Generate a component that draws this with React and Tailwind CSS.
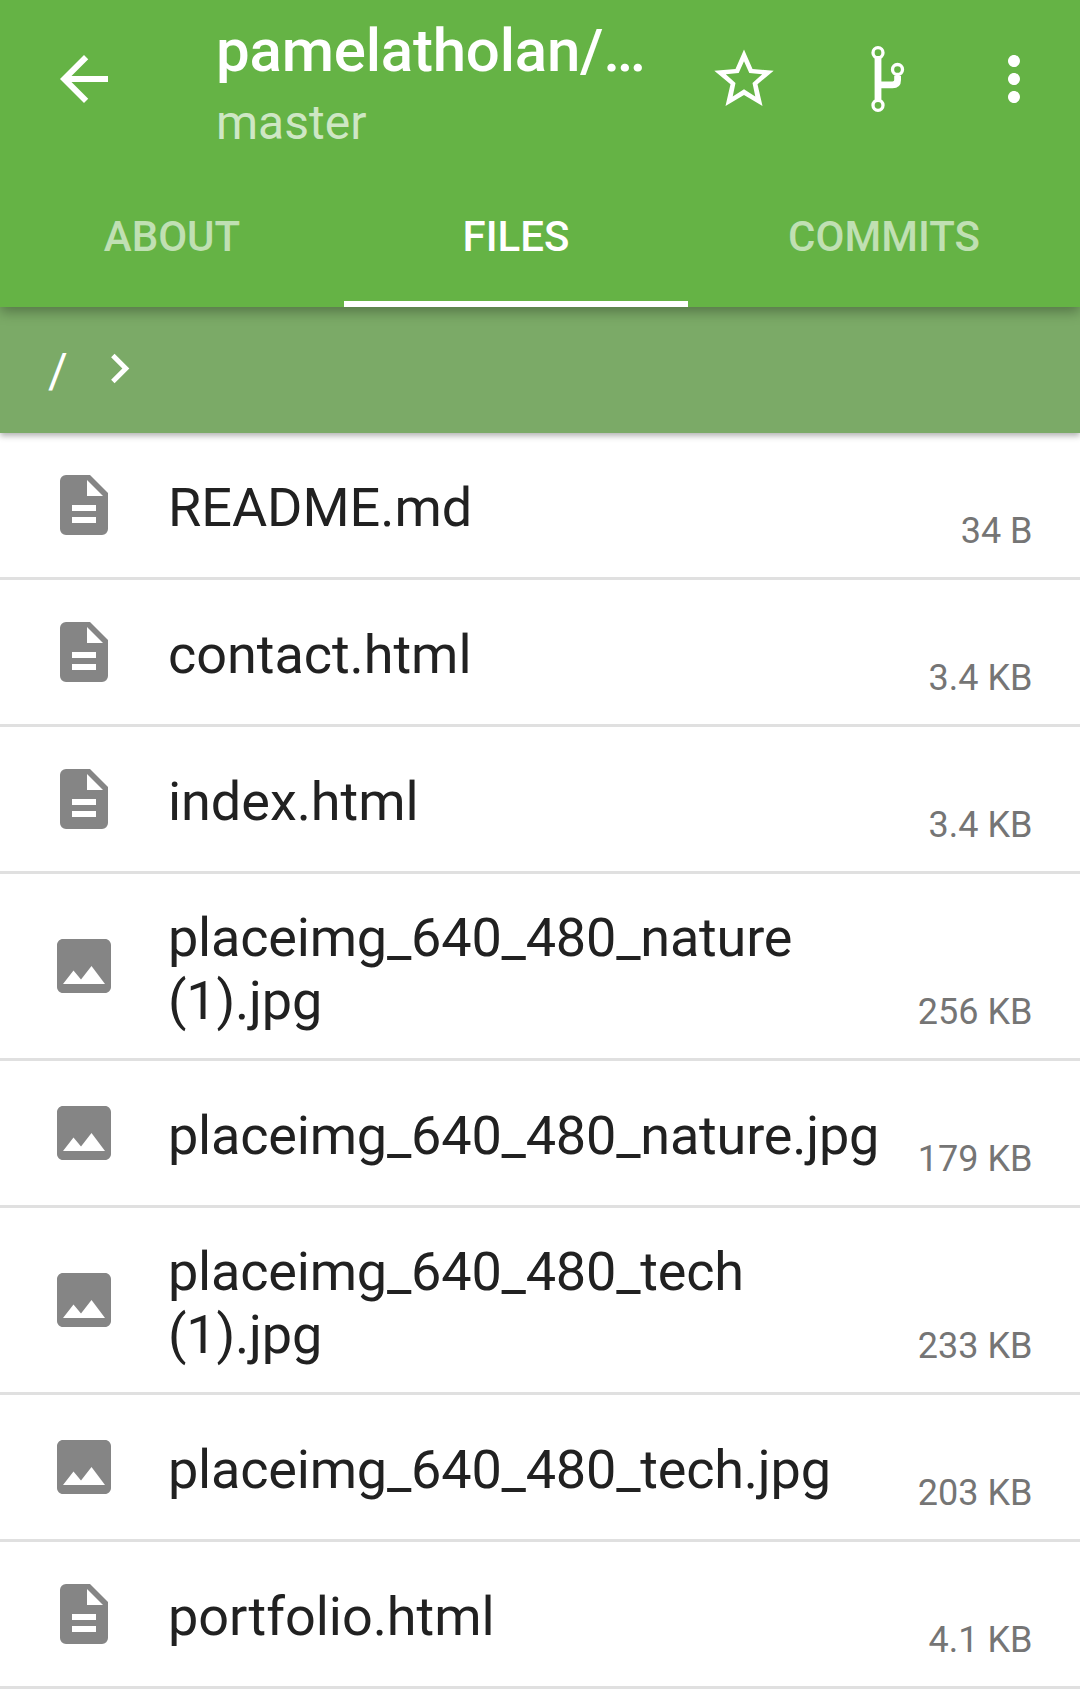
const files = [
  { name: 'README.md', size: '34 B', type: 'doc' },
  { name: 'contact.html', size: '3.4 KB', type: 'doc' },
  { name: 'index.html', size: '3.4 KB', type: 'doc' },
  { name: 'placeimg_640_480_nature (1).jpg', size: '256 KB', type: 'image' },
  { name: 'placeimg_640_480_nature.jpg', size: '179 KB', type: 'image' },
  { name: 'placeimg_640_480_tech (1).jpg', size: '233 KB', type: 'image' },
  { name: 'placeimg_640_480_tech.jpg', size: '203 KB', type: 'image' },
  { name: 'portfolio.html', size: '4.1 KB', type: 'doc' },
];

const paths = {
  back: 'M20 11H7.83l5.59-5.59L12 4l-8 8 8 8 1.41-1.41L7.83 13H20v-2z',
  more: 'M12 8c1.1 0 2-.9 2-2s-.9-2-2-2-2 .9-2 2 .9 2 2 2zm0 2c-1.1 0-2 .9-2 2s.9 2 2 2 2-.9 2-2-.9-2-2-2zm0 6c-1.1 0-2 .9-2 2s.9 2 2 2 2-.9 2-2-.9-2-2-2z',
  chevron: 'M8.59 16.59L13.17 12 8.59 7.41 10 6l6 6-6 6z',
  image: 'M21 19V5c0-1.1-.9-2-2-2H5c-1.1 0-2 .9-2 2v14c0 1.1.9 2 2 2h14c1.1 0 2-.9 2-2zM8.5 13.5l2.5 3.01L14.5 12l4.5 6H5l3.5-4.5z',
};

function Icon({ d, className }) {
  return (
    <svg viewBox="0 0 24 24" fill="currentColor" className={className}>
      <path d={d} fillRule="evenodd" />
    </svg>
  );
}

function DocIcon() {
  return (
    <svg viewBox="0 0 72 72" className="size-[72px]">
      <path
        fill="#858585"
        fillRule="evenodd"
        d="M18 6H42L60 24V60a6 6 0 0 1-6 6H18a6 6 0 0 1-6-6V12a6 6 0 0 1 6-6ZM39 11V27H55ZM24 36V42H48V36ZM24 48V54H48V48Z"
      />
    </svg>
  );
}

function StarIcon() {
  return (
    <svg viewBox="0 0 72 72" className="size-[72px]" fill="white">
      <path
        fillRule="evenodd"
        d="M36 6.500L44.500 26L65.700 27.700L49.500 41.200L54.500 63L36 52L17.500 63L22.500 41.200L6.300 27.700L27.500 26ZM36 18.300L30.700 30L17.800 31.300L27.500 40L24.700 53.500L36 46.300L47.300 53.500L44.500 40L54.200 31.300L41.300 30Z"
      />
    </svg>
  );
}

function BranchIcon() {
  return (
    <svg viewBox="0 0 72 72" className="size-[72px]" fill="none" stroke="white">
      <path d="M26 15V60M26 41.800H40.500Q45.600 41.800 45.600 37V33" strokeWidth="6.800" />
      <circle cx="26" cy="9.700" r="5" strokeWidth="3.300" fill="#65b345" />
      <circle cx="26" cy="62.300" r="5" strokeWidth="3.300" fill="#65b345" />
      <circle cx="45.500" cy="26.500" r="5" strokeWidth="3.300" fill="#65b345" />
    </svg>
  );
}

function FileRow({ name, size, type }) {
  const tracking = type === 'image' ? 'tracking-[-0.2px]' : 'tracking-[-0.04px]';
  return (
    <li className="flex items-center border-b-[3px] border-[#e0e0e0] pr-[47.5px] pl-12">
      <div className="w-[120px] shrink-0">
        {type === 'doc' ? <DocIcon /> : <Icon d={paths.image} className="size-[72px] text-[#858585]" />}
      </div>
      <div className="flex min-h-[144px] flex-1 items-stretch justify-between">
        <span className={`max-w-[720px] self-center pt-[31.5px] pb-[26.5px] text-[54px] leading-[63px] text-[#212121] ${tracking}`}>
          {name}
        </span>
        <span className="shrink-0 self-end pb-[25px] text-[36px] leading-[42px] whitespace-nowrap text-[#757575]">{size}</span>
      </div>
    </li>
  );
}

export default function App() {
  return (
    <div className="h-[1699px] w-[1080px] overflow-hidden bg-white font-[Roboto,sans-serif]">
      <header className="relative z-20 h-[307px] bg-[#65b345] text-white shadow-[0_5px_12px_rgba(0,0,0,0.3)]">
        <div className="flex h-[163px]">
          <button className="mt-[43px] ml-12 size-[72px]" aria-label="Back">
            <Icon d={paths.back} className="size-[72px]" />
          </button>
          <div className="ml-24 w-[460px] pt-[16px]">
            <h1 className="text-[60px] leading-[70px] font-medium tracking-[-0.2px] whitespace-nowrap">pamelatholan/…</h1>
            <p className="mt-[9px] text-[48px] leading-[56px] text-white/70">master</p>
          </div>
          <nav className="mt-[43px] ml-[32px] flex">
            <button className="size-[72px]" aria-label="Star"><StarIcon /></button>
            <button className="ml-[72px] size-[72px]" aria-label="Branches"><BranchIcon /></button>
            <button className="ml-[54px] size-[72px]" aria-label="More"><Icon d={paths.more} className="size-[72px]" /></button>
          </nav>
        </div>
        <div className="grid h-[144px] grid-cols-[344px_344px_392px] text-center text-[42px] leading-[50px] font-medium">
          <div className="pt-[49px] text-white/60">ABOUT</div>
          <div className="border-b-[6px] border-white pt-[49px]">FILES</div>
          <div className="pt-[49px] text-white/60">COMMITS</div>
        </div>
      </header>
      <div className="relative z-10 flex h-[126px] items-center bg-[#7baa67] pl-12 text-white shadow-[0_3px_6px_rgba(0,0,0,0.3)]">
        <span className="pt-[2px] text-[48px] leading-[56px]">/</span>
        <Icon d={paths.chevron} className="mb-[3px] ml-[22px] size-[59px]" />
      </div>
      <ul>
        {files.map((file) => (
          <FileRow key={file.name} {...file} />
        ))}
      </ul>
    </div>
  );
}
